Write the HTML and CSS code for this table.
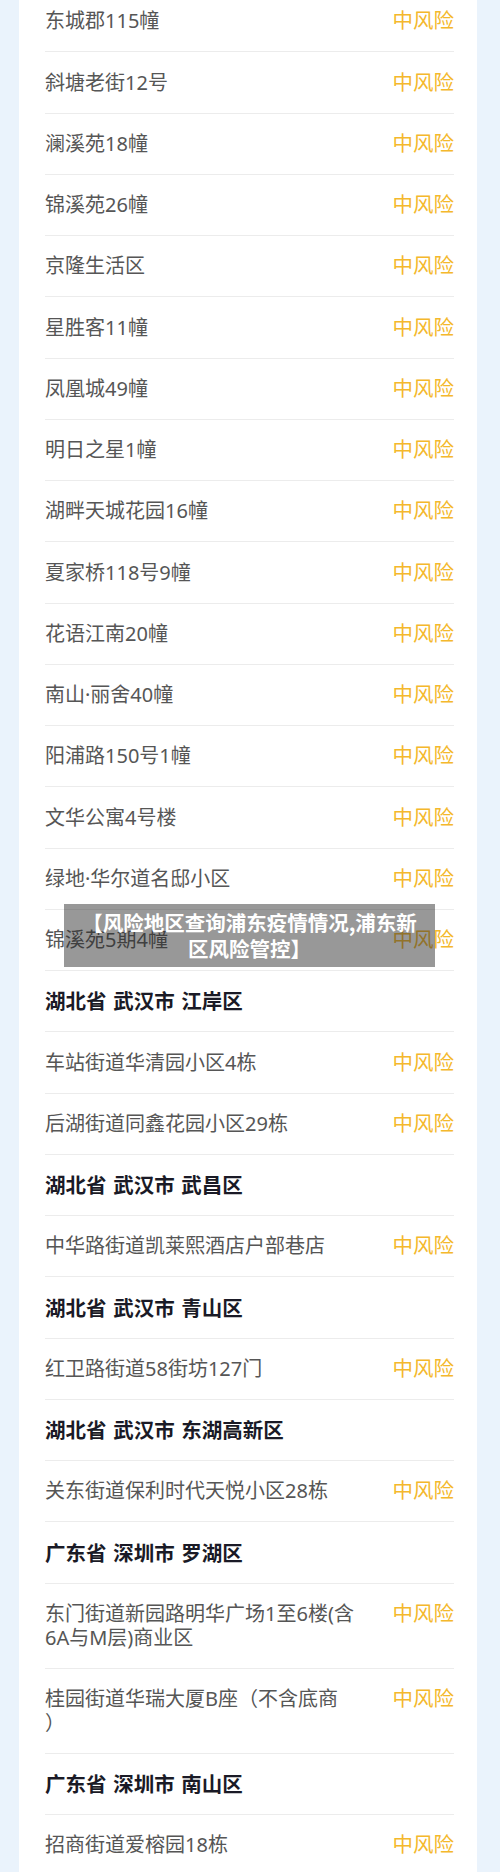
FILE: index.html
```html
<!DOCTYPE html>
<html lang="zh-CN">
<head>
<meta charset="utf-8">
<title>风险地区查询</title>
<link rel="stylesheet" href="styles.css">
</head>
<body>
<div class="page">
  <div class="card">
    <div class="row"><span class="name">东城郡115幢</span><span class="risk">中风险</span></div>
    <div class="row"><span class="name">斜塘老街12号</span><span class="risk">中风险</span></div>
    <div class="row"><span class="name">澜溪苑18幢</span><span class="risk">中风险</span></div>
    <div class="row"><span class="name">锦溪苑26幢</span><span class="risk">中风险</span></div>
    <div class="row"><span class="name">京隆生活区</span><span class="risk">中风险</span></div>
    <div class="row"><span class="name">星胜客11幢</span><span class="risk">中风险</span></div>
    <div class="row"><span class="name">凤凰城49幢</span><span class="risk">中风险</span></div>
    <div class="row"><span class="name">明日之星1幢</span><span class="risk">中风险</span></div>
    <div class="row"><span class="name">湖畔天城花园16幢</span><span class="risk">中风险</span></div>
    <div class="row"><span class="name">夏家桥118号9幢</span><span class="risk">中风险</span></div>
    <div class="row"><span class="name">花语江南20幢</span><span class="risk">中风险</span></div>
    <div class="row"><span class="name">南山·丽舍40幢</span><span class="risk">中风险</span></div>
    <div class="row"><span class="name">阳浦路150号1幢</span><span class="risk">中风险</span></div>
    <div class="row"><span class="name">文华公寓4号楼</span><span class="risk">中风险</span></div>
    <div class="row"><span class="name">绿地·华尔道名邸小区</span><span class="risk">中风险</span></div>
    <div class="row"><span class="name">锦溪苑5期4幢</span><span class="risk">中风险</span></div>
    <div class="row head"><span class="name">湖北省 武汉市 江岸区</span></div>
    <div class="row"><span class="name">车站街道华清园小区4栋</span><span class="risk">中风险</span></div>
    <div class="row"><span class="name">后湖街道同鑫花园小区29栋</span><span class="risk">中风险</span></div>
    <div class="row head"><span class="name">湖北省 武汉市 武昌区</span></div>
    <div class="row"><span class="name">中华路街道凯莱熙酒店户部巷店</span><span class="risk">中风险</span></div>
    <div class="row head"><span class="name">湖北省 武汉市 青山区</span></div>
    <div class="row"><span class="name">红卫路街道58街坊127门</span><span class="risk">中风险</span></div>
    <div class="row head"><span class="name">湖北省 武汉市 东湖高新区</span></div>
    <div class="row"><span class="name">关东街道保利时代天悦小区28栋</span><span class="risk">中风险</span></div>
    <div class="row head"><span class="name">广东省 深圳市 罗湖区</span></div>
    <div class="row"><span class="name">东门街道新园路明华广场1至6楼(含6A与M层)商业区</span><span class="risk">中风险</span></div>
    <div class="row"><span class="name">桂园街道华瑞大厦B座（不含底商）</span><span class="risk">中风险</span></div>
    <div class="row head"><span class="name">广东省 深圳市 南山区</span></div>
    <div class="row"><span class="name">招商街道爱榕园18栋</span><span class="risk">中风险</span></div>
  </div>
  <div class="banner">【风险地区查询浦东疫情情况,浦东新区风险管控】</div>
</div>
</body>
</html>
```

FILE: styles.css
```css
* { box-sizing: border-box; }
html, body {
  margin: 0;
  padding: 0;
  background: #eaf3fc;
}
body {
  font-family: "Noto Sans", "Noto Sans CJK SC", sans-serif;
  overflow: hidden;
}
.page {
  position: relative;
  height: 1872px;
  overflow: hidden;
}
.card {
  margin: -9px 0 0 19px;
  width: 458px;
  background: #ffffff;
  padding: 0 23px 0 26px;
}
.row {
  display: flex;
  align-items: flex-start;
  justify-content: space-between;
  padding: 18.25px 0;
  border-bottom: 1px solid #ececec;
  font-size: 20px;
  line-height: 23.75px;
}
.name {
  color: #565656;
  width: 310.5px;
  text-spacing-trim: space-all;
  line-break: anywhere;
}
.risk {
  color: #f4b82c;
  font-size: 20.5px;
  white-space: nowrap;
}
.head .name {
  color: #1a1a26;
  font-family: "Noto Sans CJK SC", sans-serif;
  font-size: 20.5px;
  font-weight: 700;
  word-spacing: 2px;
  line-break: auto;
}
.banner {
  position: absolute;
  left: 64px;
  top: 904px;
  width: 371px;
  height: 63px;
  padding: 5px 12px;
  background: rgba(40, 40, 40, 0.48);
  color: #ffffff;
  font-family: "Noto Sans CJK SC", sans-serif;
  font-weight: 700;
  font-size: 20.5px;
  line-height: 26px;
  text-align: center;
}
```
